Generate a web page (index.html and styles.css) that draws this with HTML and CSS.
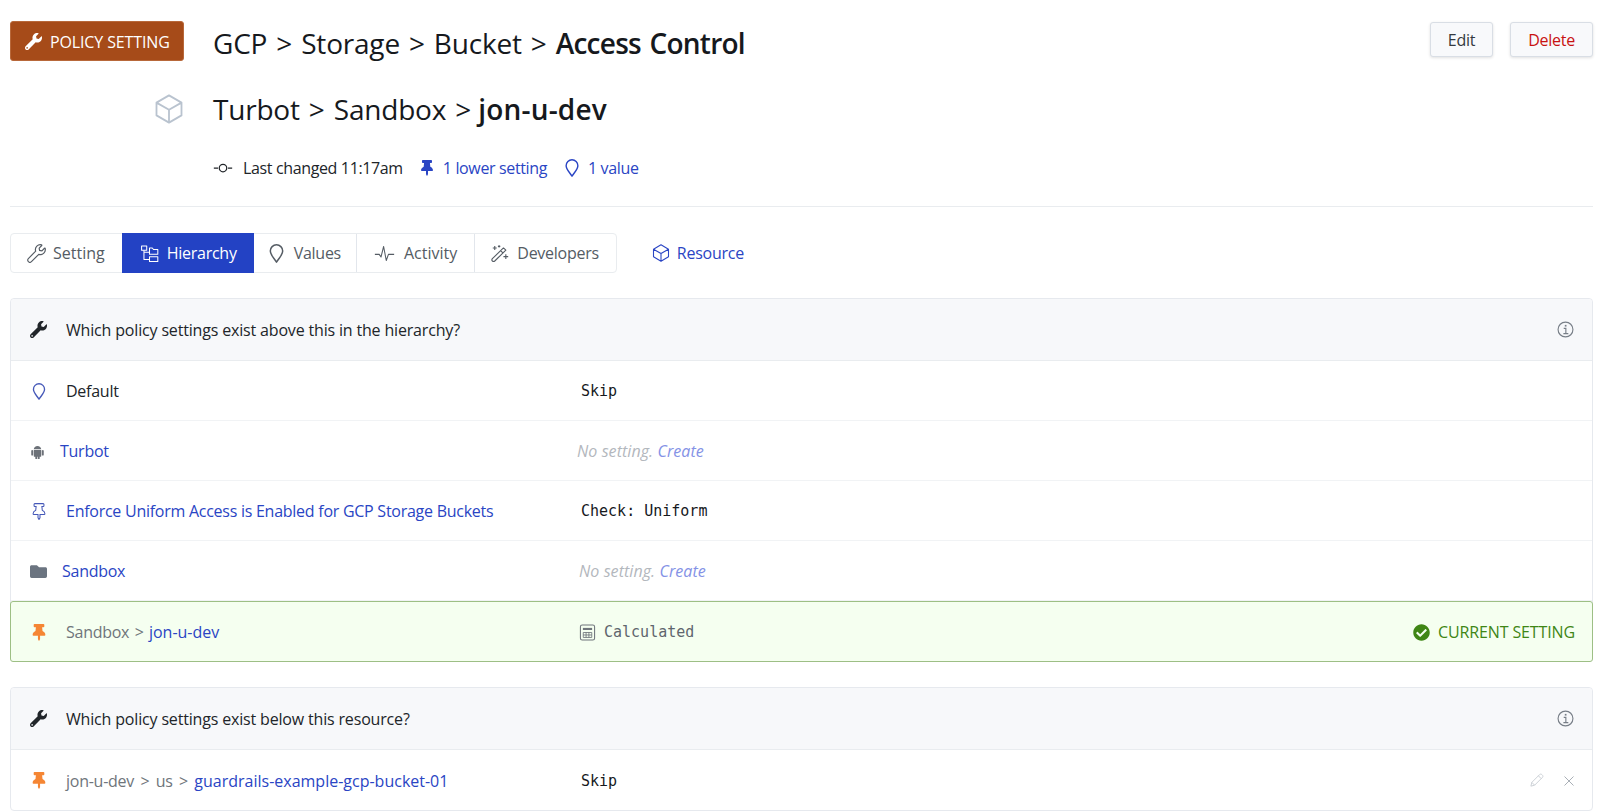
FILE: index.html
```html
<!DOCTYPE html>
<html lang="en">
<head>
  <meta charset="UTF-8" />
  <title>Policy Setting</title>
  <link rel="stylesheet" href="styles.css">
</head>
<body>
  <svg class="defs" xmlns="http://www.w3.org/2000/svg">
    <symbol id="i-wrench" viewBox="0 0 512 512"><path fill="currentColor" d="M507.73 109.1c-2.24-9.03-13.54-12.09-20.12-5.51l-74.36 74.36-67.88-11.31-11.31-67.88 74.36-74.36c6.62-6.62 3.43-17.9-5.66-20.16-47.38-11.74-99.55.91-136.58 37.93-39.64 39.64-50.55 97.1-34.05 147.2L18.74 402.76c-24.99 24.99-24.99 65.51 0 90.5 24.99 24.99 65.51 24.99 90.5 0l213.21-213.21c50.12 16.71 107.47 5.68 147.37-34.22 37.07-37.07 49.7-89.32 37.91-136.73zM64 472c-13.25 0-24-10.75-24-24 0-13.26 10.75-24 24-24s24 10.74 24 24c0 13.25-10.75 24-24 24z"/></symbol>
    <symbol id="i-wrench-line" viewBox="-20 -20 552 552"><path fill="none" stroke="currentColor" stroke-width="34" d="M507.73 109.1c-2.24-9.03-13.54-12.09-20.12-5.51l-74.36 74.36-67.88-11.31-11.31-67.88 74.36-74.36c6.62-6.62 3.43-17.9-5.66-20.16-47.38-11.74-99.55.91-136.58 37.93-39.64 39.64-50.55 97.1-34.05 147.2L18.74 402.76c-24.99 24.99-24.99 65.51 0 90.5 24.99 24.99 65.51 24.99 90.5 0l213.21-213.21c50.12 16.71 107.47 5.68 147.37-34.22 37.07-37.07 49.7-89.32 37.91-136.73z"/></symbol>
    <symbol id="i-pin" viewBox="0 0 384 512"><path fill="currentColor" d="M298.028 214.267L285.793 96H328c13.255 0 24-10.745 24-24V24c0-13.255-10.745-24-24-24H56C42.745 0 32 10.745 32 24v48c0 13.255 10.745 24 24 24h42.207L85.972 214.267C37.465 236.82 0 277.261 0 328c0 13.255 10.745 24 24 24h136v104.007c0 1.242.289 2.467.845 3.578l24 48c2.941 5.882 11.364 5.893 14.311 0l24-48a8.008 8.008 0 0 0 .845-3.578V352h136c13.255 0 24-10.745 24-24-.001-51.183-37.983-91.42-85.973-113.733z"/></symbol>
    <symbol id="i-pin-line" viewBox="-20 -20 424 552"><path fill="none" stroke="currentColor" stroke-width="34" d="M298.028 214.267L285.793 96H328c13.255 0 24-10.745 24-24V24c0-13.255-10.745-24-24-24H56C42.745 0 32 10.745 32 24v48c0 13.255 10.745 24 24 24h42.207L85.972 214.267C37.465 236.82 0 277.261 0 328c0 13.255 10.745 24 24 24h136v104.007c0 1.242.289 2.467.845 3.578l24 48c2.941 5.882 11.364 5.893 14.311 0l24-48a8.008 8.008 0 0 0 .845-3.578V352h136c13.255 0 24-10.745 24-24-.001-51.183-37.983-91.42-85.973-113.733z"/></symbol>
    <symbol id="i-folder" viewBox="0 0 512 512"><path fill="currentColor" d="M464 128H272l-64-64H48C21.49 64 0 85.49 0 112v288c0 26.51 21.49 48 48 48h416c26.51 0 48-21.49 48-48V176c0-26.51-21.49-48-48-48z"/></symbol>
    <symbol id="i-check" viewBox="0 0 512 512"><path fill="currentColor" d="M504 256c0 136.967-111.033 248-248 248S8 392.967 8 256 119.033 8 256 8s248 111.033 248 248zM227.314 387.314l184-184c6.248-6.248 6.248-16.379 0-22.627l-22.627-22.627c-6.248-6.249-16.379-6.249-22.628 0L216 308.118l-70.059-70.059c-6.248-6.248-16.379-6.248-22.628 0l-22.627 22.627c-6.248 6.248-6.248 16.379 0 22.627l104 104c6.249 6.249 16.379 6.249 22.628.001z"/></symbol>
    <symbol id="i-cube" viewBox="1.400 1.200 21.200 21.600"><path fill="none" stroke="currentColor" stroke-width="1.300" stroke-linejoin="round" d="M12 2.200l9 5.200v9.200l-9 5.200-9-5.200V7.400zM3 7.400l9 5.200 9-5.200M12 12.600v9.200"/></symbol>
    <symbol id="i-drop" viewBox="3.500 0.500 17 23"><path fill="none" stroke="currentColor" stroke-width="1.800" stroke-linejoin="round" d="M12 22.500C8.500 17 4.500 13.500 4.500 9a7.500 7.500 0 0 1 15 0c0 4.500-4 8-7.500 13.500z"/></symbol>
    <symbol id="i-commit" viewBox="0 0 24 24"><g fill="none" stroke="currentColor" stroke-width="1.500"><circle cx="12" cy="12" r="4.500"/><path d="M1 12h5M18 12h5"/></g></symbol>
    <symbol id="i-tree" viewBox="0 0 24 24"><g fill="none" stroke="currentColor" stroke-width="1.300" stroke-linejoin="round"><path d="M2 2.500h6.500v5.500H2z"/><path d="M5 8v11.500h7M5 10.500h7"/><path d="M12 5h3.500l1.500 2h5.500v6H12zM12 16h10.500v6H12z"/></g></symbol>
    <symbol id="i-pulse" viewBox="0 0 24 24"><path fill="none" stroke="currentColor" stroke-width="1.200" stroke-linejoin="round" d="M1 13h5l2 3 3-12 3 16 2.500-7H23"/></symbol>
    <symbol id="i-wand" viewBox="0 0 24 24"><g fill="none" stroke="currentColor" stroke-width="1.400" stroke-linejoin="round"><path d="M3 18.500L17 5l3 2.800L6 21.500c-1 .8-2 .8-3 0s-.8-2 0-3zM13.500 8.500l3 3"/><path d="M6 2.500v5M3.500 5h5M20 13v6M17 16h6M11.500 1.500v3M10 3h3"/></g></symbol>
    <symbol id="i-info" viewBox="0 0 24 24"><g fill="none" stroke="currentColor" stroke-width="1.600"><circle cx="12" cy="12" r="10.500"/><path d="M9.500 10.500H12.500V17.500M9 17.800h7"/><path d="M11 5.500h2.400v2.400H11z" fill="currentColor" stroke="none"/></g></symbol>
    <symbol id="i-calc" viewBox="0 0 24 24"><g fill="none" stroke="currentColor" stroke-width="1.500"><rect x="2" y="1.500" width="20" height="21" rx="2.500"/><path d="M5.500 5.500h13v3h-13z" fill="currentColor" stroke="none"/><path d="M6 12h12v7H6zM10 12v7M14 12v7M6 15.500h12" stroke-width="1.200"/></g></symbol>
    <symbol id="i-pencil" viewBox="0 0 24 24"><path fill="none" stroke="currentColor" stroke-width="1.400" stroke-linejoin="round" d="M3 21l1.500-6L17 2.500c1-1 2.500-1 3.500 0l1 1c1 1 1 2.500 0 3.500L9 19.500zM4.500 15l4.500 4.500M15 4.500l4.500 4.500"/></symbol>
    <symbol id="i-x" viewBox="0 0 24 24"><path fill="none" stroke="currentColor" stroke-width="2" d="M3 3l18 18M21 3L3 21"/></symbol>
    <symbol id="i-android" viewBox="0 0 24 24"><path fill="currentColor" d="M6 8.500C6.300 5.500 8.700 3 12 3s5.700 2.500 6 5.500zM6 9.500h12V19a1.500 1.500 0 0 1-1.500 1.500H15.500V23a1.500 1.500 0 0 1-3 0v-2.500h-1V23a1.500 1.500 0 0 1-3 0v-2.500H7.500A1.500 1.500 0 0 1 6 19zM2 11a1.500 1.500 0 0 1 3 0v6a1.500 1.500 0 0 1-3 0zM19 11a1.500 1.500 0 0 1 3 0v6a1.500 1.500 0 0 1-3 0z"/></symbol>
  </svg>

  <header class="head">
    <div class="badge"><svg class="ic-16"><use href="#i-wrench"/></svg>POLICY SETTING</div>
    <h1 class="title">GCP &gt; Storage &gt; Bucket &gt; <b>Access Control</b></h1>
    <div class="actions">
      <button class="btn">Edit</button>
      <button class="btn btn-danger">Delete</button>
    </div>
    <svg class="cube"><use href="#i-cube"/></svg>
    <h1 class="title title-sub">Turbot &gt; Sandbox &gt; <b>jon-u-dev</b></h1>
    <div class="meta">
      <svg class="ic-commit"><use href="#i-commit"/></svg><span class="meta-text">Last changed 11:17am</span>
      <svg class="ic-pin-meta"><use href="#i-pin"/></svg><a class="link">1 lower setting</a>
      <svg class="ic-drop-meta"><use href="#i-drop"/></svg><a class="link">1 value</a>
    </div>
  </header>

  <nav class="tabbar">
    <div class="tabs">
      <a class="tab tab-setting"><svg class="ic-18"><use href="#i-wrench-line"/></svg>Setting</a>
      <a class="tab tab-active"><svg class="ic-18"><use href="#i-tree"/></svg>Hierarchy</a>
      <a class="tab tab-values"><svg class="ic-18"><use href="#i-drop"/></svg>Values</a>
      <a class="tab tab-activity"><svg class="ic-21"><use href="#i-pulse"/></svg>Activity</a>
      <a class="tab tab-dev"><svg class="ic-18"><use href="#i-wand"/></svg>Developers</a>
    </div>
    <a class="link resource"><svg class="ic-18"><use href="#i-cube"/></svg>Resource</a>
  </nav>

  <section class="panel">
    <div class="panel-head">
      <svg class="ic-head"><use href="#i-wrench"/></svg>
      <span class="grow">Which policy settings exist above this in the hierarchy?</span>
      <svg class="ic-info"><use href="#i-info"/></svg>
    </div>
    <div class="row">
      <div class="name"><svg class="ic-pin ic-blue"><use href="#i-drop"/></svg>Default</div>
      <code class="value">Skip</code>
    </div>
    <div class="row">
      <div class="name"><svg class="ic-android"><use href="#i-android"/></svg><a class="link">Turbot</a></div>
      <div class="none none-a">No setting. <a class="create">Create</a></div>
    </div>
    <div class="row">
      <div class="name"><svg class="ic-pin ic-blue"><use href="#i-pin-line"/></svg><a class="link">Enforce Uniform Access is Enabled for GCP Storage Buckets</a></div>
      <code class="value">Check: Uniform</code>
    </div>
    <div class="row">
      <div class="name"><svg class="ic-folder"><use href="#i-folder"/></svg><a class="link">Sandbox</a></div>
      <div class="none none-b">No setting. <a class="create">Create</a></div>
    </div>
    <div class="row row-current">
      <div class="name"><svg class="ic-pin ic-orange"><use href="#i-pin"/></svg><span class="muted">Sandbox &gt; </span><a class="link link-path">jon-u-dev</a></div>
      <code class="value value-calc"><svg class="ic-calc"><use href="#i-calc"/></svg>Calculated</code>
      <div class="current"><svg class="ic-check"><use href="#i-check"/></svg>CURRENT SETTING</div>
    </div>
  </section>

  <section class="panel panel-below">
    <div class="panel-head">
      <svg class="ic-head"><use href="#i-wrench"/></svg>
      <span class="grow">Which policy settings exist below this resource?</span>
      <svg class="ic-info"><use href="#i-info"/></svg>
    </div>
    <div class="row">
      <div class="name"><svg class="ic-pin ic-orange"><use href="#i-pin"/></svg><span class="muted">jon-u-dev &gt; us &gt; </span><a class="link link-path">guardrails-example-gcp-bucket-01</a></div>
      <code class="value">Skip</code>
      <div class="row-actions">
        <svg class="ic-edit"><use href="#i-pencil"/></svg>
        <svg class="ic-close"><use href="#i-x"/></svg>
      </div>
    </div>
  </section>
</body>
</html>
```

FILE: styles.css
```css
* {
  box-sizing: border-box;
}
html, body {
  height: 812px;
  overflow: hidden;
}
body {
  margin: 0;
  padding: 21px 7px 0 10px;
  font-family: "Open Sans", "Noto Sans", sans-serif;
  font-size: 16px;
  letter-spacing: -0.26px;
  color: #212529;
  background: #ffffff;
}
.defs {
  display: none;
}
.link {
  color: #2a45c4;
}
.link-path {
  letter-spacing: 0;
}
svg {
  flex: none;
}

/* header */
.head {
  display: grid;
  grid-template-columns: 174px 1fr auto;
  column-gap: 29px;
  grid-template-rows: 40px auto auto;
  padding-bottom: 28px;
  border-bottom: 1px solid #e9ecef;
}
.badge {
  display: flex;
  align-items: center;
  gap: 8px;
  padding: 1px 0 0 14px;
  background: #a64b19;
  border: 1px solid #b8683a;
  border-radius: 3px;
  color: #ffffff;
  letter-spacing: -0.13px;
  white-space: nowrap;
}
.ic-16 {
  width: 17px;
  height: 17px;
}
.title {
  margin: 2px 0 0;
  font-size: 28px;
  font-weight: 400;
  line-height: 40px;
  color: #16191d;
  letter-spacing: -0.2px;
  word-spacing: 2px;
  white-space: nowrap;
}
.title b {
  font-weight: 600;
  letter-spacing: -0.75px;
}
.title-sub {
  grid-column: 2 / 4;
  margin-top: 28px;
}
.title-sub b {
  margin-left: -2px;
  letter-spacing: 0.2px;
}
.actions {
  display: flex;
  gap: 17px;
  height: 35px;
  margin-top: 1px;
}
.btn {
  height: 35px;
  padding: 0 17px;
  background: #f8f9fb;
  border: 1px solid #d9dee5;
  border-radius: 3px;
  box-shadow: 0 1px 3px rgba(0, 0, 0, 0.12);
  font: inherit;
  letter-spacing: -0.26px;
  color: #343a40;
}
.btn-danger {
  color: #c81212;
}
.cube {
  grid-column: 1;
  grid-row: 2;
  justify-self: end;
  align-self: end;
  width: 30px;
  height: 30px;
  margin-bottom: 5px;
  color: #b9c3cf;
}
.meta {
  grid-column: 2 / 4;
  display: flex;
  align-items: center;
  height: 20px;
  margin-top: 29px;
  letter-spacing: -0.36px;
}
.ic-commit {
  width: 20px;
  height: 20px;
  margin-right: 10px;
  color: #212529;
}
.meta-text {
  margin-right: 17px;
}
.ic-pin-meta {
  width: 14px;
  height: 16px;
  margin-right: 9px;
  color: #2a45c4;
}
.ic-drop-meta {
  width: 14px;
  height: 18px;
  margin: 0 9px 0 18px;
  color: #2a45c4;
}

/* tabs */
.tabbar {
  display: flex;
  align-items: center;
  margin-top: 26px;
}
.tabs {
  display: flex;
  height: 40px;
  background: #ffffff;
  border: 1px solid #e9ecef;
  border-radius: 4px;
}
.tab {
  display: flex;
  align-items: center;
  gap: 8px;
  padding: 0 17px;
  color: #555c64;
  border-left: 1px solid #e2e6ec;
}
.tab-setting {
  padding-left: 16px;
  gap: 7px;
  border-left: 0;
  letter-spacing: 0;
}
.tab-active {
  margin: -1px 0;
  padding-left: 18px;
  background: #2342c4;
  border-left: 0;
  color: #ffffff;
}
.tab-values {
  border-left: 0;
  padding: 0 15px 0 13px;
}
.tab-activity {
  gap: 9px;
  letter-spacing: 0;
}
.tab-dev {
  padding-left: 15px;
}
.ic-18 {
  width: 19px;
  height: 19px;
}
.ic-21 {
  width: 21px;
  height: 21px;
}
.resource {
  display: flex;
  align-items: center;
  gap: 7px;
  margin-left: 35px;
}
.resource svg {
  width: 18px;
  height: 18px;
}

/* panels */
.panel {
  margin-top: 25px;
  background: #ffffff;
  border: 1px solid #e6e9ee;
  border-radius: 4px;
}
.panel-head {
  display: flex;
  align-items: center;
  height: 62px;
  padding: 0 19px;
  background: #f7f8fa;
  border-bottom: 1px solid #e9ecef;
  border-radius: 4px 4px 0 0;
  letter-spacing: -0.17px;
}
.ic-head {
  width: 17px;
  height: 17px;
  margin-right: 19px;
  color: #212529;
}
.grow {
  flex: 1;
}
.ic-info {
  width: 17px;
  height: 17px;
  margin-right: -1px;
  color: #777e87;
}
.row {
  display: flex;
  align-items: center;
  height: 60px;
  padding: 1px 19px 0;
  border-bottom: 1px solid #f1f3f5;
}
.panel-below .row {
  border-bottom: 0;
}
.name {
  display: flex;
  align-items: center;
  flex: 0 0 551px;
  white-space: pre;
}
.ic-pin {
  width: 14px;
  height: 17px;
  margin: 0 20px 0 2px;
}
.ic-blue {
  color: #4558b8;
}
.ic-orange {
  color: #f58634;
}
.ic-android {
  width: 15px;
  height: 15px;
  margin-right: 15px;
  color: #6c7178;
}
.ic-folder {
  width: 17px;
  height: 17px;
  margin-right: 15px;
  color: #6b7480;
}
.muted {
  color: #6f757b;
  word-spacing: 1.5px;
}
.panel-below .muted {
  word-spacing: 2.5px;
}
.value {
  font-family: "DejaVu Sans Mono", monospace;
  font-size: 15px;
  letter-spacing: 0;
  color: #16191d;
}
.value-calc {
  display: flex;
  align-items: center;
  flex: 1;
  gap: 8px;
  color: #5f666d;
}
.ic-calc {
  width: 17px;
  height: 17px;
  margin-left: -2px;
  color: #6f757b;
}
.none {
  font-style: italic;
  letter-spacing: 0.07px;
  color: #b3b7bd;
}
.none-a {
  margin-left: -4px;
}
.none-b {
  margin-left: -2px;
}
.create {
  color: #8492e6;
}
.row-current {
  height: 61px;
  margin: 0 -1px -1px;
  padding-left: 19px;
  padding-right: 17px;
  background: #f5fff0;
  border: 1px solid #9dbf85;
  border-radius: 3px;
}
.current {
  display: flex;
  align-items: center;
  gap: 8px;
  letter-spacing: -0.12px;
  color: #3f8615;
}
.ic-check {
  width: 17px;
  height: 17px;
}
.row-actions {
  display: flex;
  align-items: center;
  gap: 19px;
  margin-left: auto;
  margin-right: -2px;
  color: #c5cad0;
}
.ic-edit {
  width: 15px;
  height: 15px;
}
.ic-close {
  width: 12px;
  height: 12px;
  color: #a9afb6;
}
```
